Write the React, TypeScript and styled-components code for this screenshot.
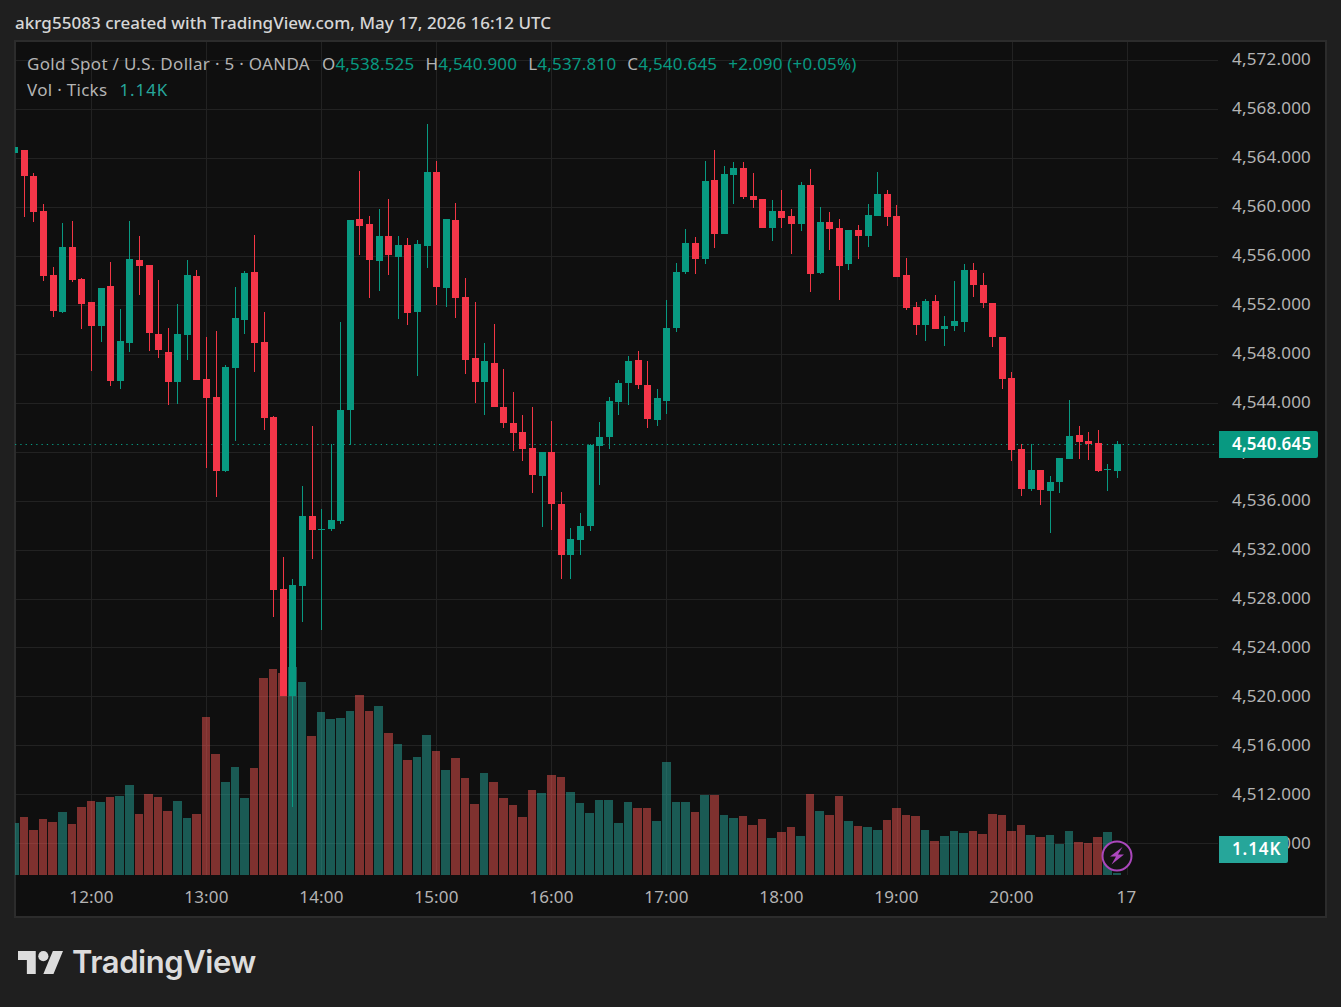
import React from "react";
import styled, { createGlobalStyle } from "styled-components";

const GlobalStyle = createGlobalStyle`
  body {
    margin: 0;
    background: #1f1f1f;
    font-family: "Noto Sans", "Open Sans", sans-serif;
  }
`;

const Page = styled.div`
  width: 1341px;
  height: 1007px;
  overflow: hidden;
`;

const Header = styled.div`
  height: 40px;
  padding: 0 0 0 15px;
  line-height: 46px;
  box-sizing: border-box;
  font-size: 17px;
  font-weight: 500;
  letter-spacing: 0.03px;
  color: #d6d6d6;
  white-space: nowrap;
`;

const Frame = styled.div`
  margin-left: 14px;
  width: 1313px;
  height: 878px;
  box-sizing: border-box;
  border: 2px solid #2c2c2c;
  background: #0f0f0f;
`;

const ChartRow = styled.div`
  display: grid;
  grid-template-columns: 1202px 1fr;
  height: 833px;
`;

const Pane = styled.div`
  position: relative;
  height: 833px;
`;

const PlotSvg = styled.svg`
  display: block;
  overflow: visible;
`;

const GridLine = styled.line`
  stroke: #222222;
  stroke-width: 1;
`;

const LastPriceLine = styled.line`
  stroke: #089981;
  stroke-width: 1;
  stroke-dasharray: 1.3 4;
`;

const VolumeBar = styled.rect<{ $up: boolean }>`
  fill: ${(p) => (p.$up ? "rgba(38, 166, 154, 0.5)" : "rgba(239, 83, 80, 0.5)")};
`;

const Wick = styled.rect<{ $up: boolean }>`
  fill: ${(p) => (p.$up ? "#089981" : "#f23645")};
`;

const Body = styled.rect<{ $up: boolean }>`
  fill: ${(p) => (p.$up ? "#089981" : "#f53649")};
`;

const Legend = styled.div`
  position: absolute;
  left: 11px;
  top: 9px;
  font-size: 17px;
  letter-spacing: 0.3px;
  line-height: 26px;
  color: #b4b4b4;
  white-space: nowrap;
`;

const LegendRow = styled.div`
  display: flex;
`;

const Title = styled.span`
  margin-right: 12px;
`;

const Ohlc = styled.span`
  margin-right: 11px;
  letter-spacing: 0.2px;
`;

const Value = styled.span<{ $soft?: boolean }>`
  color: ${(p) => (p.$soft ? "#26a69a" : "#089981")};
  letter-spacing: ${(p) => (p.$soft ? 0.9 : 0.2)}px;
`;

const SessionBadge = styled.svg`
  position: absolute;
  left: 1084px;
  top: 797px;
`;

const PriceAxis = styled.div`
  position: relative;
`;

const PriceList = styled.div`
  margin-top: -8px;
  padding-left: 14px;
`;

const PriceLabel = styled.div`
  height: 49.03px;
  line-height: 49px;
  font-size: 17px;
  letter-spacing: 0.2px;
  color: #b4b4b4;
`;

const AxisTag = styled.div<{ $soft?: boolean }>`
  position: absolute;
  left: 1px;
  top: ${(p) => (p.$soft ? 794 : 389)}px;
  width: ${(p) => (p.$soft ? 69 : 99)}px;
  height: 27px;
  box-sizing: border-box;
  padding-left: 13px;
  line-height: 26px;
  font-size: 17px;
  font-weight: 600;
  letter-spacing: ${(p) => (p.$soft ? 0.9 : 0.2)}px;
  border-radius: 0 2px 2px 0;
  color: #ffffff;
  background: ${(p) => (p.$soft ? "#26a69a" : "#089981")};
`;

const TimeAxis = styled.div`
  display: flex;
  height: 41px;
  padding-left: 18px;
`;

const TimeLabel = styled.div`
  width: 115px;
  text-align: center;
  line-height: 44px;
  font-size: 17px;
  letter-spacing: 0.2px;
  color: #b4b4b4;
`;

const Footer = styled.div`
  display: flex;
  align-items: center;
  gap: 9px;
  margin-top: 25px;
  padding-left: 18px;
  color: #dcdcdc;
`;

const Wordmark = styled.span`
  font-family: Inter, "Noto Sans", sans-serif;
  font-size: 31px;
  font-weight: 600;
  letter-spacing: -0.45px;
  line-height: 38px;
`;

// up, high, body top, body bottom, low: screen y of each candle
type Candle = [number, number, number, number, number];

const candles: Candle[] = [
  [1, 147, 147, 153, 153], [0, 150, 150, 176, 217], [0, 173, 176, 212, 222], [0, 204, 211, 276, 281],
  [0, 267, 275, 311, 317], [1, 223, 247, 312, 313], [0, 221, 247, 280, 282], [0, 278, 279, 304, 329],
  [0, 302, 302, 326, 371], [1, 288, 288, 326, 342], [0, 262, 286, 381, 386], [1, 309, 341, 381, 389],
  [1, 221, 259, 343, 352], [0, 236, 260, 266, 295], [0, 265, 265, 333, 351], [0, 280, 334, 350, 358],
  [0, 328, 352, 382, 405], [1, 304, 334, 382, 404], [1, 260, 275, 335, 360], [0, 270, 276, 380, 380],
  [0, 337, 379, 398, 468], [0, 331, 397, 471, 497], [1, 365, 367, 471, 472], [1, 287, 318, 368, 441],
  [1, 271, 273, 320, 334], [0, 235, 272, 343, 372], [0, 312, 342, 418, 430], [0, 416, 417, 590, 617],
  [0, 557, 589, 696, 696], [1, 579, 585, 696, 807], [1, 486, 516, 586, 622], [0, 426, 516, 530, 559],
  [1, 509, 529, 530, 630], [1, 444, 520, 529, 531], [1, 322, 410, 521, 524], [1, 220, 220, 410, 445],
  [0, 171, 219, 226, 255], [0, 216, 224, 260, 298], [1, 209, 236, 261, 291], [0, 199, 236, 255, 275],
  [1, 236, 245, 257, 319], [0, 238, 245, 313, 325], [1, 240, 244, 312, 376], [1, 124, 172, 246, 268],
  [0, 161, 172, 287, 305], [1, 219, 219, 288, 307], [0, 203, 220, 298, 318], [0, 278, 297, 360, 374],
  [0, 302, 358, 382, 403], [1, 343, 361, 382, 415], [0, 324, 363, 407, 407], [0, 369, 407, 423, 428],
  [0, 392, 423, 433, 451], [0, 415, 432, 449, 461], [0, 407, 448, 475, 493], [1, 452, 452, 476, 527],
  [0, 421, 452, 504, 530], [0, 492, 504, 555, 579], [1, 528, 539, 555, 579], [1, 513, 526, 540, 555],
  [1, 444, 445, 526, 531], [1, 422, 437, 446, 485], [1, 397, 401, 437, 449], [1, 380, 383, 402, 415],
  [1, 356, 361, 383, 405], [0, 351, 360, 385, 389], [0, 361, 385, 419, 428], [1, 389, 398, 420, 426],
  [1, 300, 328, 401, 414], [1, 263, 272, 328, 332], [1, 229, 243, 272, 274], [0, 237, 243, 259, 274],
  [1, 161, 181, 259, 264], [0, 150, 180, 234, 248], [1, 166, 174, 234, 234], [1, 162, 168, 175, 204],
  [0, 162, 168, 197, 199], [0, 173, 196, 200, 208], [0, 199, 199, 228, 228], [1, 200, 211, 228, 241],
  [0, 190, 211, 218, 228], [0, 209, 216, 224, 254], [1, 182, 185, 224, 231], [0, 169, 185, 274, 292],
  [1, 207, 222, 273, 274], [0, 212, 222, 229, 250], [0, 219, 228, 266, 300], [1, 230, 230, 264, 270],
  [0, 225, 230, 236, 259], [1, 204, 215, 236, 247], [1, 172, 194, 216, 216], [0, 190, 194, 217, 226],
  [0, 205, 216, 277, 277], [0, 258, 275, 308, 310], [0, 302, 307, 325, 335], [1, 299, 301, 325, 341],
  [0, 295, 301, 329, 329], [1, 316, 326, 329, 346], [1, 281, 321, 326, 331], [1, 264, 270, 322, 332],
  [0, 263, 270, 285, 297], [0, 273, 285, 303, 308], [0, 303, 303, 337, 347], [0, 337, 337, 379, 389],
  [0, 372, 378, 450, 461], [0, 444, 449, 489, 496], [1, 444, 470, 489, 491], [0, 470, 470, 490, 505],
  [1, 476, 482, 491, 533], [1, 458, 458, 482, 493], [1, 400, 436, 459, 459], [0, 426, 435, 442, 459],
  [0, 432, 441, 444, 460], [0, 430, 443, 471, 472], [1, 464, 469, 470, 491], [1, 441, 444, 471, 478],
];

// top of each volume bar, the base is at y = 875
const volumes: number[] = [
  823, 817, 830, 819, 822, 812, 824, 807, 801, 802, 797, 796, 785, 814, 794, 797, 811, 801, 818, 814,
  717, 754, 782, 767, 798, 768, 678, 669, 673, 667, 682, 736, 712, 719, 718, 711, 695, 711, 706, 733,
  744, 760, 757, 735, 751, 770, 758, 778, 804, 773, 782, 798, 805, 817, 790, 793, 775, 777, 792, 803,
  813, 800, 800, 823, 802, 808, 808, 821, 762, 802, 802, 812, 795, 795, 815, 818, 816, 825, 819, 838,
  832, 827, 836, 794, 811, 815, 796, 821, 826, 827, 830, 820, 808, 815, 816, 830, 841, 836, 831, 833,
  831, 834, 814, 815, 831, 825, 835, 837, 835, 844, 831, 842, 843, 837, 832, 873,
];

const gridY = [60, 109, 158, 207, 256, 305, 354, 403, 452, 501, 550, 599, 647, 696, 745, 794, 843];
const gridX = [91, 206, 321, 436, 551, 666, 781, 897, 1012, 1127];
const prices = [
  "4,572.000", "4,568.000", "4,564.000", "4,560.000", "4,556.000", "4,552.000", "4,548.000", "4,544.000",
  "4,540.000", "4,536.000", "4,532.000", "4,528.000", "4,524.000", "4,520.000", "4,516.000", "4,512.000",
  "4,508.000",
];
const times = ["12:00", "13:00", "14:00", "15:00", "16:00", "17:00", "18:00", "19:00", "20:00", "17"];

const centerX = (i: number) => 14.8 + i * 9.588;
const barLeft = (i: number) => Math.round(centerX(i) - 4.79);

const Plot: React.FC = () => (
  <PlotSvg width={1202} height={833} viewBox="16 42 1202 833">
    <defs>
      <clipPath id="plotClip">
        <rect x={15} y={42} width={1203} height={833} />
      </clipPath>
    </defs>
    {gridY.map((y) => (
      <GridLine key={y} x1={16} x2={1218} y1={y + 0.5} y2={y + 0.5} />
    ))}
    {gridX.map((x) => (
      <GridLine key={x} x1={x + 0.5} x2={x + 0.5} y1={42} y2={875} />
    ))}
    <LastPriceLine x1={15} x2={1218} y1={444.5} y2={444.5} />
    <g clipPath="url(#plotClip)">
      {volumes.map((top, i) => (
        <VolumeBar
          key={i}
          $up={candles[i][0] === 1}
          x={barLeft(i)}
          y={top}
          width={barLeft(i + 1) - barLeft(i) - 1}
          height={875 - top}
        />
      ))}
      {candles.map(([up, high, bodyTop, bodyBottom, low], i) => {
        const left = Math.round(centerX(i) - 3.5);
        return (
          <g key={i}>
            <Wick $up={up === 1} x={left + 3} y={high} width={1} height={low - high} />
            <Body $up={up === 1} x={left} y={bodyTop} width={7} height={Math.max(bodyBottom - bodyTop, 1)} />
          </g>
        );
      })}
    </g>
  </PlotSvg>
);

const App: React.FC = () => (
  <Page>
    <GlobalStyle />
    <Header>akrg55083 created with TradingView.com, May 17, 2026 16:12 UTC</Header>
    <Frame>
      <ChartRow>
        <Pane>
          <Plot />
          <Legend>
            <LegendRow>
              <Title>Gold Spot / U.S. Dollar · 5 · OANDA</Title>
              <Ohlc>O<Value>4,538.525</Value></Ohlc>
              <Ohlc>H<Value>4,540.900</Value></Ohlc>
              <Ohlc>L<Value>4,537.810</Value></Ohlc>
              <Ohlc>C<Value>4,540.645</Value></Ohlc>
              <Value>+2.090 (+0.05%)</Value>
            </LegendRow>
            <LegendRow>
              <Title>Vol · Ticks</Title>
              <Value $soft>1.14K</Value>
            </LegendRow>
          </Legend>
          <SessionBadge width={34} height={34} viewBox="0 0 34 34">
            <circle cx={17} cy={17} r={14.5} fill="#131313" stroke="#ab47bc" strokeWidth={2} />
            <path d="M22.5 8 L10 17.5 H16 L11.5 25.5 L24 15.5 H18 Z" fill="#ab47bc" />
          </SessionBadge>
        </Pane>
        <PriceAxis>
          <PriceList>
            {prices.map((p) => (
              <PriceLabel key={p}>{p}</PriceLabel>
            ))}
          </PriceList>
          <AxisTag>4,540.645</AxisTag>
          <AxisTag $soft>1.14K</AxisTag>
        </PriceAxis>
      </ChartRow>
      <TimeAxis>
        {times.map((t) => (
          <TimeLabel key={t}>{t}</TimeLabel>
        ))}
      </TimeAxis>
    </Frame>
    <Footer>
      <svg width={45} height={23} viewBox="0 4 35.5 18" fill="currentColor">
        <path d="M14 22H7V11H0V4h14v18zM28 22h-8l7.5-18h8L28 22z" />
        <circle cx={20} cy={8} r={4} />
      </svg>
      <Wordmark>TradingView</Wordmark>
    </Footer>
  </Page>
);

export default App;
